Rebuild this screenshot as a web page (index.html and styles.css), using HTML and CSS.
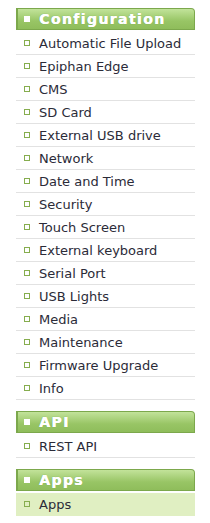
FILE: index.html
```html
<!DOCTYPE html>
<html lang="en">
<head>
    <meta charset="UTF-8">
    <meta name="viewport" content="width=device-width, initial-scale=1.0">
    <title>Menu</title>
    <link rel="stylesheet" href="styles.css">
</head>
<body>
    <div class="sidebar">
        <div class="section">
            <div class="section-head"><span class="head-bullet"></span>Configuration</div>
            <ul class="menu">
                <li><span class="bullet"></span>Automatic File Upload</li>
                <li><span class="bullet"></span>Epiphan Edge</li>
                <li><span class="bullet"></span>CMS</li>
                <li><span class="bullet"></span>SD Card</li>
                <li><span class="bullet"></span>External USB drive</li>
                <li><span class="bullet"></span>Network</li>
                <li><span class="bullet"></span>Date and Time</li>
                <li><span class="bullet"></span>Security</li>
                <li><span class="bullet"></span>Touch Screen</li>
                <li><span class="bullet"></span>External keyboard</li>
                <li><span class="bullet"></span>Serial Port</li>
                <li><span class="bullet"></span>USB Lights</li>
                <li><span class="bullet"></span>Media</li>
                <li><span class="bullet"></span>Maintenance</li>
                <li><span class="bullet"></span>Firmware Upgrade</li>
                <li><span class="bullet"></span>Info</li>
            </ul>
        </div>

        <div class="section">
            <div class="section-head"><span class="head-bullet"></span>API</div>
            <ul class="menu">
                <li><span class="bullet"></span>REST API</li>
            </ul>
        </div>

        <div class="section">
            <div class="section-head"><span class="head-bullet"></span>Apps</div>
            <ul class="menu">
                <li class="active"><span class="bullet"></span>Apps</li>
            </ul>
        </div>
    </div>
</body>
</html>
```

FILE: styles.css
```css
body {
    margin: 0;
    padding: 8px 0 0 16px;
    font-family: "DejaVu Sans", Verdana, sans-serif;
    background-color: #FFF;
}
.sidebar {
    width: 179px;
}
.section {
    margin-bottom: 11px;
}
.section-head {
    display: flex;
    align-items: center;
    height: 20px;
    margin-bottom: 2px;
    padding-left: 6px;
    background: linear-gradient(#c2e39a, #98c565 60%, #8fbd5b);
    border: 1px solid #7ca84c;
    border-left-width: 2px;
    border-top-right-radius: 4px;
    color: #FFF;
    font-size: 14px;
    font-weight: bold;
    letter-spacing: 1.4px;
    text-shadow: 0.5px 0 0 #FFF, 0 0 1px #6f9a45;
}
.head-bullet {
    width: 6px;
    height: 6px;
    margin-right: 9px;
    background-color: #FFF;
}
.menu {
    list-style: none;
    margin: 0;
    padding: 0;
}
.menu li {
    display: flex;
    align-items: center;
    height: 22px;
    padding-left: 8px;
    border-bottom: 1px solid #e2e2e2;
    color: #2b2b38;
    font-size: 13px;
}
.menu li.active {
    background-color: #e0efc2;
    border-bottom-color: #e0efc2;
}
.bullet {
    width: 4px;
    height: 4px;
    margin-right: 9px;
    border: 1.5px solid #86ad4e;
}
```
